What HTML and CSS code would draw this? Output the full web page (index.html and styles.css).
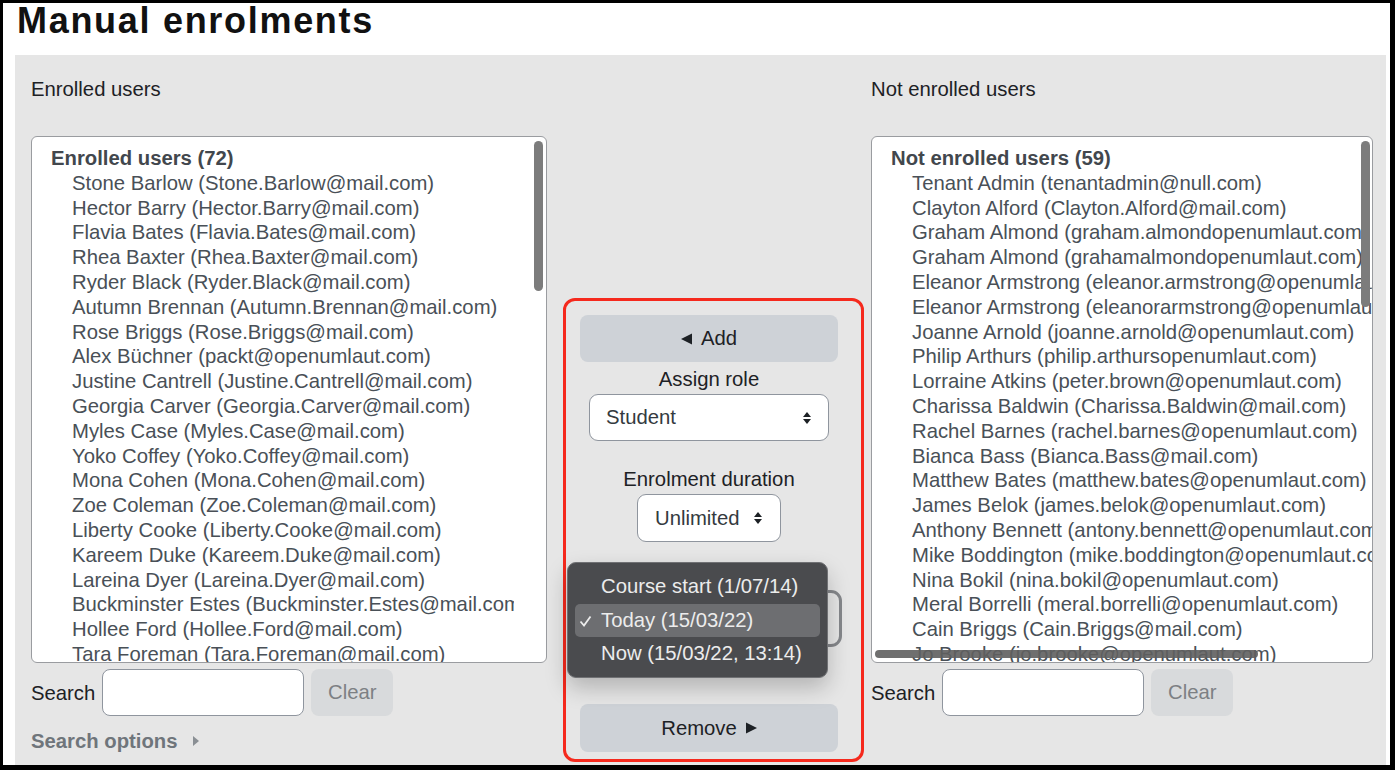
FILE: index.html
```html
<!DOCTYPE html>
<html lang="en">
<head>
<meta charset="utf-8">
<title>Manual enrolments</title>
<link rel="stylesheet" href="styles.css">
</head>
<body>
<div class="frame">
  <header class="page-head"><h1>Manual enrolments</h1></header>
  <main class="panel">
    <section class="col col-left">
      <div class="col-label">Enrolled users</div>
      <div class="listbox listbox-left">
        <div class="row group">Enrolled users (72)</div>
        <div class="row opt">Stone Barlow (Stone.Barlow@mail.com)</div>
        <div class="row opt">Hector Barry (Hector.Barry@mail.com)</div>
        <div class="row opt">Flavia Bates (Flavia.Bates@mail.com)</div>
        <div class="row opt">Rhea Baxter (Rhea.Baxter@mail.com)</div>
        <div class="row opt">Ryder Black (Ryder.Black@mail.com)</div>
        <div class="row opt">Autumn Brennan (Autumn.Brennan@mail.com)</div>
        <div class="row opt">Rose Briggs (Rose.Briggs@mail.com)</div>
        <div class="row opt">Alex Büchner (packt@openumlaut.com)</div>
        <div class="row opt">Justine Cantrell (Justine.Cantrell@mail.com)</div>
        <div class="row opt">Georgia Carver (Georgia.Carver@mail.com)</div>
        <div class="row opt">Myles Case (Myles.Case@mail.com)</div>
        <div class="row opt">Yoko Coffey (Yoko.Coffey@mail.com)</div>
        <div class="row opt">Mona Cohen (Mona.Cohen@mail.com)</div>
        <div class="row opt">Zoe Coleman (Zoe.Coleman@mail.com)</div>
        <div class="row opt">Liberty Cooke (Liberty.Cooke@mail.com)</div>
        <div class="row opt">Kareem Duke (Kareem.Duke@mail.com)</div>
        <div class="row opt">Lareina Dyer (Lareina.Dyer@mail.com)</div>
        <div class="row opt">Buckminster Estes (Buckminster.Estes@mail.com)</div>
        <div class="row opt">Hollee Ford (Hollee.Ford@mail.com)</div>
        <div class="row opt">Tara Foreman (Tara.Foreman@mail.com)</div>
        <span class="vthumb vthumb-left"></span>
      </div>
      <div class="search-row">
        <span class="search-label">Search</span>
        <span class="search-input"></span>
        <span class="btn-clear">Clear</span>
      </div>
      <div class="search-options">Search options
        <svg class="caret" width="8" height="12" viewBox="0 0 8 12"><polygon points="1,1 7,6 1,11" fill="#8a8f94"/></svg>
      </div>
    </section>

    <section class="col col-mid">
      <div class="controls">
        <div class="btn btn-add">
          <svg width="11" height="12" viewBox="0 0 11 12"><polygon points="11,0.5 11,11.5 0,6" fill="#1d2125"/></svg>
          <span>Add</span>
        </div>
        <div class="ctl-label">Assign role</div>
        <div class="select select-role">
          <span>Student</span>
          <svg class="updown" width="10" height="14" viewBox="0 0 10 14"><polygon points="1,6 5,1 9,6" fill="#1d2125"/><polygon points="1,8 9,8 5,13" fill="#1d2125"/></svg>
        </div>
        <div class="ctl-label ctl-label-gap">Enrolment duration</div>
        <div class="select select-dur">
          <span>Unlimited</span>
          <svg class="updown" width="10" height="14" viewBox="0 0 10 14"><polygon points="1,6 5,1 9,6" fill="#1d2125"/><polygon points="1,8 9,8 5,13" fill="#1d2125"/></svg>
        </div>
        <div class="select select-start"></div>
        <div class="btn btn-remove">
          <span>Remove</span>
          <svg width="11" height="12" viewBox="0 0 11 12"><polygon points="0,0.5 0,11.5 11,6" fill="#1d2125"/></svg>
        </div>

        <div class="popup">
          <div class="pop-row">Course start (1/07/14)</div>
          <div class="pop-row pop-selected">
            <svg class="check" width="13" height="12" viewBox="0 0 13 12"><polyline points="1.5,6.5 5,10.5 11.5,1.5" fill="none" stroke="#ececec" stroke-width="1.8"/></svg>
            Today (15/03/22)
          </div>
          <div class="pop-row">Now (15/03/22, 13:14)</div>
        </div>
      </div>
    </section>

    <section class="col col-right">
      <div class="col-label">Not enrolled users</div>
      <div class="listbox listbox-right">
        <div class="row group">Not enrolled users (59)</div>
        <div class="row opt">Tenant Admin (tenantadmin@null.com)</div>
        <div class="row opt">Clayton Alford (Clayton.Alford@mail.com)</div>
        <div class="row opt">Graham Almond (graham.almondopenumlaut.com)</div>
        <div class="row opt">Graham Almond (grahamalmondopenumlaut.com)</div>
        <div class="row opt">Eleanor Armstrong (eleanor.armstrong@openumlaut.com)</div>
        <div class="row opt">Eleanor Armstrong (eleanorarmstrong@openumlaut.com)</div>
        <div class="row opt">Joanne Arnold (joanne.arnold@openumlaut.com)</div>
        <div class="row opt">Philip Arthurs (philip.arthursopenumlaut.com)</div>
        <div class="row opt">Lorraine Atkins (peter.brown@openumlaut.com)</div>
        <div class="row opt">Charissa Baldwin (Charissa.Baldwin@mail.com)</div>
        <div class="row opt">Rachel Barnes (rachel.barnes@openumlaut.com)</div>
        <div class="row opt">Bianca Bass (Bianca.Bass@mail.com)</div>
        <div class="row opt">Matthew Bates (matthew.bates@openumlaut.com)</div>
        <div class="row opt">James Belok (james.belok@openumlaut.com)</div>
        <div class="row opt">Anthony Bennett (antony.bennett@openumlaut.com)</div>
        <div class="row opt">Mike Boddington (mike.boddington@openumlaut.com)</div>
        <div class="row opt">Nina Bokil (nina.bokil@openumlaut.com)</div>
        <div class="row opt">Meral Borrelli (meral.borrelli@openumlaut.com)</div>
        <div class="row opt">Cain Briggs (Cain.Briggs@mail.com)</div>
        <div class="row opt">Jo Brooke (jo.brooke@openumlaut.com)</div>
        <span class="vthumb vthumb-right"></span>
        <span class="hthumb"></span>
      </div>
      <div class="search-row">
        <span class="search-label">Search</span>
        <span class="search-input"></span>
        <span class="btn-clear">Clear</span>
      </div>
    </section>
  </main>
</div>
</body>
</html>
```

FILE: styles.css
```css
* { box-sizing: border-box; }

html, body {
  margin: 0;
  padding: 0;
  background: #ffffff;
}

.frame {
  width: 1395px;
  height: 770px;
  border-style: solid;
  border-color: #000;
  border-width: 3px 5px 5px 3px;
  padding: 0 4px 0 12px;
  display: flex;
  flex-direction: column;
  font-family: "Liberation Sans", Arial, Helvetica, sans-serif;
  font-size: 20.3px;
  color: #1d2125;
  overflow: hidden;
}

.page-head {
  height: 52px;
  flex: none;
}

.page-head h1 {
  margin: 0;
  padding-left: 2px;
  font-size: 36px;
  line-height: 36px;
  font-weight: bold;
  letter-spacing: 1.7px;
  color: #111;
}

.panel {
  flex: 1;
  background: #e6e6e6;
  display: flex;
  padding: 0 13px 0 16px;
}

.col {
  flex: none;
  display: flex;
  flex-direction: column;
}

.col-left { width: 516px; padding-top: 22px; }
.col-right { width: 502px; padding-top: 22px; }
.col-mid { width: 324px; padding: 243px 0 0 16px; }

.col-label {
  line-height: 24px;
  height: 24px;
}

.listbox {
  position: relative;
  margin-top: 35px;
  height: 527px;
  background: #fff;
  border: 1px solid #9a9ca0;
  border-radius: 6px;
  padding: 9px 0 0 19px;
  overflow: hidden;
  color: #495057;
}

.row {
  line-height: 24.8px;
  height: 24.8px;
  white-space: nowrap;
}

.listbox-left .row {
  width: 463px;
  overflow: hidden;
}

.group {
  font-weight: bold;
  color: #42474d;
}

.opt { padding-left: 21px; }

.vthumb {
  position: absolute;
  top: 4px;
  width: 9px;
  border-radius: 5px;
  background: #7c7c7c;
}

.vthumb-left { right: 3px; height: 150px; }
.vthumb-right { right: 2px; height: 166px; }

.hthumb {
  position: absolute;
  left: 3px;
  bottom: 4px;
  width: 383px;
  height: 8px;
  border-radius: 4px;
  background: rgba(95, 95, 95, 0.9);
}

.search-row {
  margin-top: 6px;
  display: flex;
  align-items: center;
  gap: 7px;
  height: 47px;
}

.search-label { line-height: 24px; }

.search-input {
  width: 202px;
  height: 47px;
  background: #fff;
  border: 1px solid #8f959e;
  border-radius: 8px;
}

.btn-clear {
  width: 82px;
  height: 47px;
  border-radius: 8px;
  background: #d8dadc;
  color: #7d8084;
  display: flex;
  align-items: center;
  justify-content: center;
}

.search-options {
  margin-top: 13px;
  line-height: 24px;
  font-weight: bold;
  color: #6f757b;
  display: flex;
  align-items: center;
}

.search-options .caret { margin-left: 14px; }

.controls {
  position: relative;
  width: 301px;
  height: 464px;
  border: 3px solid #f5291d;
  border-radius: 12px;
  padding: 14px 23px 7px 14px;
  display: flex;
  flex-direction: column;
}

.btn {
  height: 47px;
  border-radius: 8px;
  background: #ced2d7;
  display: flex;
  align-items: center;
  justify-content: center;
  gap: 9px;
  color: #1d2125;
  flex: none;
}

.ctl-label {
  margin-top: 5px;
  line-height: 24px;
  text-align: center;
}

.ctl-label-gap { margin-top: 26px; }

.select {
  margin-top: 3px;
  background: #fff;
  border: 1px solid #8f959e;
  border-radius: 9px;
  display: flex;
  align-items: center;
  justify-content: space-between;
  color: #343a40;
  flex: none;
}

.select-role {
  width: 240px;
  height: 47px;
  margin-left: 9px;
  padding: 0 16px 0 16px;
}

.select-dur {
  width: 144px;
  height: 48px;
  align-self: center;
  padding: 0 17px 0 17px;
}

.select-start {
  margin-top: 48px;
  margin-left: 4px;
  width: 258px;
  height: 57px;
  border: 3px solid #85878b;
  border-radius: 11px;
  background: #e6e6e6;
}

.btn-remove { margin-top: 57px; height: 48px; }

.popup {
  position: absolute;
  left: 1px;
  top: 261px;
  width: 261px;
  height: 116px;
  background: #4a4b4e;
  border: 1px solid #707174;
  border-radius: 9px;
  padding: 7px 7px 0 7px;
  box-shadow: 0 10px 22px rgba(0, 0, 0, 0.22);
  color: #ececec;
}

.pop-row {
  position: relative;
  height: 33.5px;
  line-height: 33.5px;
  padding-left: 26px;
  border-radius: 5px;
  white-space: nowrap;
}

.pop-selected { background: #6d6e71; }

.pop-selected .check {
  position: absolute;
  left: 4px;
  top: 11px;
}
```
